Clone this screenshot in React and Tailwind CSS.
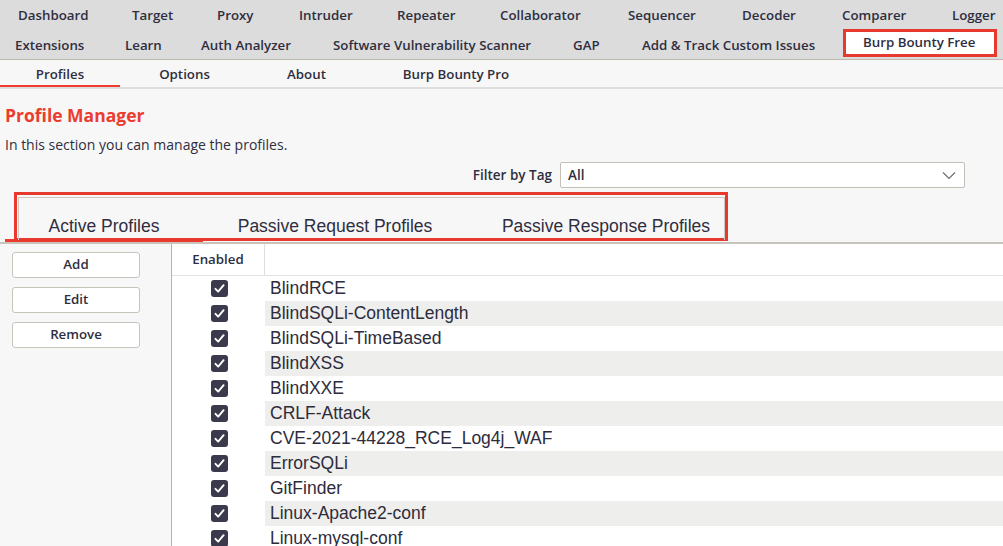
import React from "react";

const topRow1 = [
  ["Dashboard", 114],
  ["Target", 85],
  ["Proxy", 82],
  ["Intruder", 98],
  ["Repeater", 103],
  ["Collaborator", 128],
  ["Sequencer", 114],
  ["Decoder", 100],
  ["Comparer", 110],
  ["Logger", 51],
];

const topRow2 = [
  ["Extensions", 110],
  ["Learn", 76],
  ["Auth Analyzer", 132],
  ["Software Vulnerability Scanner", 240],
  ["GAP", 69],
  ["Add & Track Custom Issues", 204],
];

const subTabs = [
  ["Profiles", 120],
  ["Options", 129],
  ["About", 115],
  ["Burp Bounty Pro", 184],
];

const profileTabs = [
  ["Active Profiles", 198],
  ["Passive Request Profiles", 264],
  ["Passive Response Profiles", 278],
];

const profiles = [
  "BlindRCE",
  "BlindSQLi-ContentLength",
  "BlindSQLi-TimeBased",
  "BlindXSS",
  "BlindXXE",
  "CRLF-Attack",
  "CVE-2021-44228_RCE_Log4j_WAF",
  "ErrorSQLi",
  "GitFinder",
  "Linux-Apache2-conf",
  "Linux-mysql-conf",
];

const CheckBox = () => (
  <div className="w-[17px] h-[17px] rounded-[3px] bg-[#3b3a4d] flex items-center justify-center">
    <svg width="13" height="13" viewBox="0 0 13 13" fill="none">
      <path
        d="M2.5 6.8 L5.2 9.6 L10.6 3.2"
        stroke="#ffffff"
        strokeWidth="1.9"
        strokeLinecap="round"
        strokeLinejoin="round"
      />
    </svg>
  </div>
);

const App = () => {
  return (
    <div className="relative w-[1003px] h-[546px] overflow-hidden bg-[#f7f7f7] font-['Open_Sans',sans-serif] text-[#2f2e40]">
      {/* Burp main tabs */}
      <div className="bg-[#dcdcdc] border-b border-[#bcb8b0] h-[60px] text-[13.3px] font-semibold">
        <div className="flex items-center h-[32px] pl-[18px]">
          {topRow1.map(([label, w]) => (
            <div key={label} style={{ width: w }} className="whitespace-nowrap">
              {label}
            </div>
          ))}
        </div>
        <div className="flex items-center h-[27px] pl-[15px]">
          {topRow2.map(([label, w]) => (
            <div key={label} style={{ width: w }} className="whitespace-nowrap">
              {label}
            </div>
          ))}
          <div className="self-start -mt-[3px] ml-[-3px] w-[154px] h-[28px] border-[3px] border-[#e8392f] bg-white flex items-center pl-[17px] whitespace-nowrap">
            Burp Bounty Free
          </div>
        </div>
      </div>

      {/* Burp Bounty sub tabs */}
      <div className="flex h-[29px] border-b-2 border-[#dedede] text-[13.3px] font-semibold">
        {subTabs.map(([label, w], i) => (
          <div
            key={label}
            style={{ width: w }}
            className={
              "flex items-center justify-center whitespace-nowrap pt-[2px] " +
              (i === 0 ? "shadow-[inset_0_-2px_0_#ef3b2f]" : "")
            }
          >
            {label}
          </div>
        ))}
      </div>

      {/* Profile manager header */}
      <div className="px-[5px] pt-[15px]">
        <h1 className="text-[17.5px] font-bold text-[#ea3d2f] leading-[22px]">
          Profile Manager
        </h1>
        <p className="text-[14px] mt-[10px] leading-[18px]">
          In this section you can manage the profiles.
        </p>
      </div>

      <div className="flex justify-end items-center pr-[38px] mt-[8px] text-[13.5px] font-semibold">
        <span className="mr-[8px]">Filter by Tag</span>
        <div className="w-[405px] h-[26px] bg-white border border-[#c4c0b8] rounded-[2px] flex items-center justify-between pl-[7px] pr-[8px]">
          <span>All</span>
          <svg width="14" height="9" viewBox="0 0 14 9" fill="none">
            <path d="M1 1.5 L7 7.5 L13 1.5" stroke="#6c6c76" strokeWidth="1.2" />
          </svg>
        </div>
      </div>

      {/* Profile type tabs */}
      <div className="flex h-[50px] mt-[6px] pl-[5px] border-b-2 border-[#c8c4bc] font-['Liberation_Sans',Arial,sans-serif] text-[17.5px] leading-[20px]">
        {profileTabs.map(([label, w], i) => (
          <div
            key={label}
            style={{ width: w }}
            className={
              "flex items-end justify-center pb-[6px] whitespace-nowrap " +
              (i === 0 ? "shadow-[inset_0_-3px_0_#ef3b2f]" : "")
            }
          >
            {label}
          </div>
        ))}
      </div>

      {/* Annotation box around tabs */}
      <div className="absolute left-[14px] top-[192px] w-[714px] h-[49px] border-[3px] border-[#e8392f]">
        <div className="ml-px mt-[2px] h-full border-t border-x border-[#cdc9c2]" />
      </div>

      {/* Buttons + table */}
      <div className="flex">
        <div className="w-[171px] shrink-0 pl-[12px] pt-[8px] flex flex-col gap-[9px] text-[13.3px] font-semibold">
          {["Add", "Edit", "Remove"].map((b) => (
            <button
              key={b}
              className="w-[128px] h-[26px] bg-white border border-[#c8c4bc] rounded-[3px] flex items-center justify-center"
            >
              {b}
            </button>
          ))}
        </div>
        <div className="flex-1 bg-white border-l border-[#b4b4b4] h-[302px]">
          <div className="flex h-[32px] border-b border-[#e2e2e2]">
            <div className="w-[93px] border-r border-[#dedede] flex items-center justify-center text-[13.3px] font-semibold">
              Enabled
            </div>
            <div className="flex-1" />
          </div>
          {profiles.map((name, i) => (
            <div key={name} className="flex h-[25px]">
              <div className="w-[93px] flex items-center justify-center pl-[1px]">
                <CheckBox />
              </div>
              <div
                className={
                  "flex-1 flex items-center pl-[5px] font-['Liberation_Sans',Arial,sans-serif] text-[17.5px] text-[#2d2c3c] " +
                  (i % 2 === 1 ? "bg-[#eeeeec]" : "")
                }
              >
                {name}
              </div>
            </div>
          ))}
        </div>
      </div>
    </div>
  );
};

export default App;
